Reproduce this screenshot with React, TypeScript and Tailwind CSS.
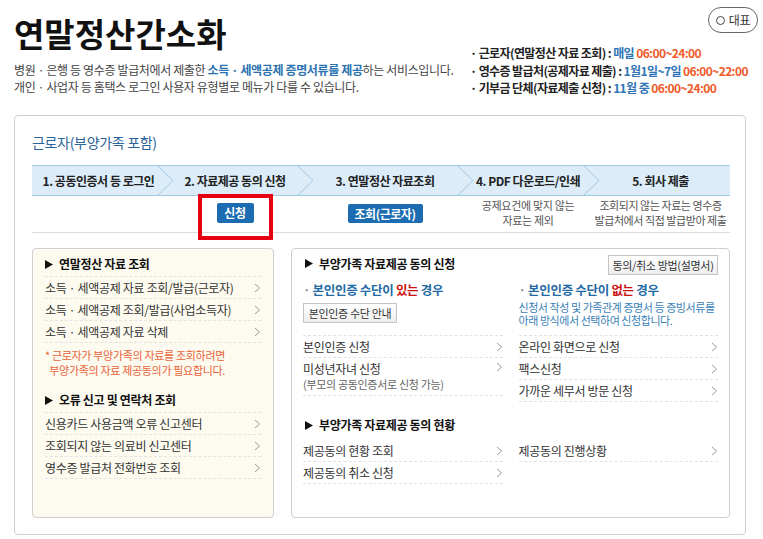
import React from 'react';

const FONT = { fontFamily: '"Noto Sans CJK KR", "Noto Sans", "Liberation Sans", sans-serif' };

function Arrow() {
  return (
    <svg width="7" height="10" viewBox="0 0 7 10" className="shrink-0">
      <path d="M1 1 L5.5 5 L1 9" fill="none" stroke="#9a9a9a" strokeWidth="1" />
    </svg>
  );
}

function Tri() {
  return (
    <svg width="8" height="9" viewBox="0 0 8 9" className="shrink-0">
      <path d="M0 0 L8 4.5 L0 9 Z" fill="#111" />
    </svg>
  );
}

function Row({ label, sub }: { label: string; sub?: string }) {
  return (
    <div
      className={`flex items-center justify-between border-b border-dashed border-[#e3e3e3] ${
        sub ? 'h-[38px]' : 'h-[22px]'
      }`}
    >
      <div className="flex flex-col">
        <span className="text-[12px] leading-[16px] text-[#333]">{label}</span>
        {sub && <span className="text-[11px] leading-[15px] text-[#666]">{sub}</span>}
      </div>
      <div className={sub ? 'self-start mt-[4px]' : ''}>
        <Arrow />
      </div>
    </div>
  );
}

const steps = [
  { label: '1. 공동인증서 등 로그인', w: 'w-[133px]' },
  { label: '2. 자료제공 동의 신청', w: 'w-[140px]' },
  { label: '3. 연말정산 자료조회', w: 'w-[160px]' },
  { label: '4. PDF 다운로드/인쇄', w: 'w-[126px]' },
  { label: '5. 회사 제출', w: 'flex-1' },
];

export default function App() {
  return (
    <div className="w-[763px] h-[539px] overflow-hidden bg-white tracking-[-0.02em]" style={FONT}>
      {/* header */}
      <div className="flex justify-between h-[115px] pl-[14px] pr-[5px]">
        <div className="flex-1 pt-[17px]">
          <h1 className="text-[33px] leading-[33px] font-bold text-[#111] tracking-normal">연말정산간소화</h1>
          <p className="mt-[11px] text-[12px] leading-[17px] text-[#444] tracking-[-0.03em]">
            병원 · 은행 등 영수증 발급처에서 제출한{' '}
            <span className="text-[#2a72b0] font-semibold">소득 · 세액공제 증명서류를 제공</span>하는 서비스입니다.
            <br />
            개인 · 사업자 등 홈택스 로그인 사용자 유형별로 메뉴가 다를 수 있습니다.
          </p>
        </div>
        <div className="w-[288px] flex flex-col pt-[7px]">
          <div className="self-end flex items-center justify-center gap-[4px] w-[50px] h-[26px] rounded-full border border-[#666] text-[12px] text-[#333]">
            <span className="w-[9px] h-[9px] rounded-full border border-[#444]" />
            대표
          </div>
          <ul className="mt-[11px] text-[12px] leading-[17.5px] font-bold text-[#222] whitespace-nowrap tracking-[-0.05em]">
            <li>
              · 근로자(연말정산 자료 조회) : <span className="text-[#2f74b5]">매일</span>{' '}
              <span className="text-[#f05a28] font-semibold">06:00~24:00</span>
            </li>
            <li>
              · 영수증 발급처(공제자료 제출) : <span className="text-[#2f74b5]">1월1일~7일</span>{' '}
              <span className="text-[#f05a28] font-semibold">06:00~22:00</span>
            </li>
            <li>
              · 기부금 단체(자료제출 신청) : <span className="text-[#2f74b5]">11월 중</span>{' '}
              <span className="text-[#f05a28] font-semibold">06:00~24:00</span>
            </li>
          </ul>
        </div>
      </div>

      {/* main card */}
      <div className="ml-[14px] w-[732px] h-[420px] rounded-[4px] border border-[#cfcfcf] pl-[17px] pr-[15px] pt-[16px]">
        <h2 className="text-[14px] leading-[20px] text-[#2a6499]">근로자(부양가족 포함)</h2>

        {/* steps */}
        <div className="mt-[13px] flex h-[31px] bg-[#dcedf9] border-y border-[#a3c8e3]">
          {steps.map((s, i) => (
            <div
              key={s.label}
              className={`relative flex items-center justify-center ${s.w} text-[12px] font-semibold text-[#222] tracking-[-0.04em]`}
            >
              {s.label}
              {i < steps.length - 1 && (
                <svg
                  width="16"
                  height="31"
                  viewBox="0 0 16 31"
                  className="absolute right-[-8px] top-[-1px] z-10"
                >
                  <path d="M0 0 L16 15.5 L0 31" fill="none" stroke="#a3c8e3" strokeWidth="1" />
                </svg>
              )}
            </div>
          ))}
        </div>

        {/* under steps */}
        <div className="flex h-[37px] border-b border-[#dcdcdc]">
          <div className="w-[133px]" />
          <div className="relative w-[140px] flex justify-center pt-[7px]">
            <button className="h-[20px] w-[37px] rounded-[2px] bg-[#1b6cb0] text-[12px] font-bold text-white">
              신청
            </button>
            <div className="absolute left-[33px] top-[-2px] w-[75px] h-[46px] border-4 border-[#e60012]" />
          </div>
          <div className="w-[160px] flex justify-center pt-[8px]">
            <button className="h-[19px] w-[75px] rounded-[2px] bg-[#1b6cb0] text-[12px] font-bold text-white tracking-[-0.04em]">
              조회(근로자)
            </button>
          </div>
          <div className="w-[126px] pt-[2px] text-center text-[11px] leading-[15px] text-[#555]">
            공제요건에 맞지 않는
            <br />
            자료는 제외
          </div>
          <div className="flex-1 pt-[2px] text-center text-[11px] leading-[15px] text-[#555] tracking-[-0.04em]">
            조회되지 않는 자료는 영수증
            <br />
            발급처에서 직접 발급받아 제출
          </div>
        </div>

        {/* panels */}
        <div className="mt-[15px] flex gap-[17px]">
          {/* left panel */}
          <div className="w-[242px] h-[270px] rounded-[4px] border border-[#cfcfcf] bg-[#fdfbef] px-[12px] pt-[3px]">
            <div className="flex items-center gap-[6px] h-[25px] border-b border-dashed border-[#e3e3e3] text-[12px] font-bold text-[#111]">
              <Tri />
              연말정산 자료 조회
            </div>
            <Row label="소득 · 세액공제 자료 조회/발급(근로자)" />
            <Row label="소득 · 세액공제 조회/발급(사업소득자)" />
            <Row label="소득 · 세액공제 자료 삭제" />
            <p className="pt-[5px] text-[11px] leading-[15px] text-[#e8623a]">
              * 근로자가 부양가족의 자료를 조회하려면
              <br />
              &nbsp;&nbsp;부양가족의 자료 제공동의가 필요합니다.
            </p>
            <div className="mt-[10px] flex items-center gap-[6px] h-[25px] border-b border-dashed border-[#e3e3e3] text-[12px] font-bold text-[#111]">
              <Tri />
              오류 신고 및 연락처 조회
            </div>
            <Row label="신용카드 사용금액 오류 신고센터" />
            <Row label="조회되지 않는 의료비 신고센터" />
            <Row label="영수증 발급처 전화번호 조회" />
          </div>

          {/* right panel */}
          <div className="flex-1 h-[270px] rounded-[4px] border border-[#cfcfcf] bg-white px-[11px] pt-[6px]">
            <div className="flex items-center justify-between h-[20px]">
              <div className="flex items-center gap-[6px] pl-[2px] text-[12px] font-bold text-[#111] -mt-[3px]">
                <Tri />
                부양가족 자료제공 동의 신청
              </div>
              <button className="h-[20px] w-[110px] border border-[#c4c4c4] bg-gradient-to-b from-white to-[#eeeeee] text-[11px] text-[#333]">
                동의/취소 방법(설명서)
              </button>
            </div>

            <div className="mt-[7px] grid grid-cols-2 gap-x-[16px] items-start">
              <div>
                <div className="h-[54px] border-b border-dashed border-[#e3e3e3]">
                  <div className="h-[16px] text-[12.5px] leading-[16px] font-semibold text-[#1f6aa5]">
                    <span className="text-[#9a9a9a]">·</span> 본인인증 수단이 <span className="text-[#cc1111]">있는</span> 경우
                  </div>
                  <button className="mt-[5px] h-[20px] w-[94px] border border-[#c4c4c4] bg-gradient-to-b from-white to-[#eeeeee] text-[11px] text-[#333]">
                    본인인증 수단 안내
                  </button>
                </div>
                <Row label="본인인증 신청" />
                <Row label="미성년자녀 신청" sub="(부모의 공동인증서로 신청 가능)" />
              </div>
              <div>
                <div className="h-[54px] border-b border-dashed border-[#e3e3e3]">
                  <div className="h-[16px] text-[12.5px] leading-[16px] font-semibold text-[#1f6aa5]">
                    <span className="text-[#9a9a9a]">·</span> 본인인증 수단이 <span className="text-[#cc1111]">없는</span> 경우
                  </div>
                  <p className="mt-[3px] text-[11px] leading-[13px] text-[#3a7fb8] tracking-[-0.04em]">
                    신청서 작성 및 가족관계 증명서 등 증빙서류를
                    <br />
                    아래 방식에서 선택하여 신청합니다.
                  </p>
                </div>
                <Row label="온라인 화면으로 신청" />
                <Row label="팩스신청" />
                <Row label="가까운 세무서 방문 신청" />
              </div>
            </div>

            <div className="mt-[13px] flex items-center gap-[6px] h-[20px] pl-[2px] text-[12px] font-bold text-[#111]">
              <Tri />
              부양가족 자료제공 동의 현황
            </div>
            <div className="mt-[5px] grid grid-cols-2 gap-x-[16px] items-start">
              <div>
                <Row label="제공동의 현황 조회" />
                <Row label="제공동의 취소 신청" />
              </div>
              <div>
                <Row label="제공동의 진행상황" />
              </div>
            </div>
          </div>
        </div>
      </div>
    </div>
  );
}
